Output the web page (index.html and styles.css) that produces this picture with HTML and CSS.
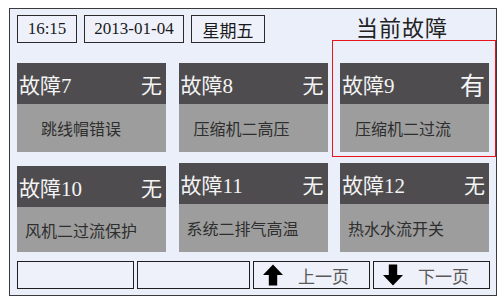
FILE: index.html
```html
<!DOCTYPE html>
<html lang="zh-CN">
<head>
    <meta charset="UTF-8">
    <title>当前故障</title>
    <link rel="stylesheet" href="styles.css">
</head>
<body>
    <div class="panel">
        <div class="top-bar">
            <div class="info-box time-box">16:15</div>
            <div class="info-box date-box">2013-01-04</div>
            <div class="info-box week-box">星期五</div>
            <div class="page-title">当前故障</div>
        </div>

        <div class="fault-grid">
            <div class="fault-card">
                <div class="fault-head"><span>故障7</span><span>无</span></div>
                <div class="fault-body indent-wide">跳线帽错误</div>
            </div>
            <div class="fault-card">
                <div class="fault-head"><span>故障8</span><span>无</span></div>
                <div class="fault-body indent-mid">压缩机二高压</div>
            </div>
            <div class="fault-card active">
                <div class="fault-head"><span>故障9</span><span class="state-on">有</span></div>
                <div class="fault-body indent-mid">压缩机二过流</div>
            </div>

            <div class="fault-card short">
                <div class="fault-head"><span>故障10</span><span>无</span></div>
                <div class="fault-body">风机二过流保护</div>
            </div>
            <div class="fault-card">
                <div class="fault-head"><span>故障11</span><span>无</span></div>
                <div class="fault-body">系统二排气高温</div>
            </div>
            <div class="fault-card">
                <div class="fault-head"><span>故障12</span><span>无</span></div>
                <div class="fault-body">热水水流开关</div>
            </div>
        </div>

        <div class="nav-bar">
            <div class="nav-btn"></div>
            <div class="nav-btn"></div>
            <div class="nav-btn">
                <svg class="arrow" viewBox="0 0 20 22" width="20" height="22">
                    <path d="M10 0.5 L20 11 L14.2 11 L14.2 21.5 L5.8 21.5 L5.8 11 L0 11 Z" fill="#000"/>
                </svg>
                <span>上一页</span>
            </div>
            <div class="nav-btn">
                <svg class="arrow" viewBox="0 0 20 22" width="20" height="22">
                    <path d="M10 21.5 L20 11 L14.2 11 L14.2 0.5 L5.8 0.5 L5.8 11 L0 11 Z" fill="#000"/>
                </svg>
                <span>下一页</span>
            </div>
        </div>
    </div>
</body>
</html>
```

FILE: styles.css
```css
* {
    margin: 0;
    padding: 0;
    box-sizing: border-box;
}

body {
    font-family: "Liberation Serif", "Noto Sans CJK SC", serif;
    background-color: #fff;
    color: #222;
    width: 500px;
    height: 304px;
    overflow: hidden;
}

.panel {
    margin: 8px 0 0 9px;
    width: 488px;
    height: 288px;
    border: 1px solid #3a3a3a;
    background-color: #ebeff9;
    padding: 6px 0 0 7px;
}

/* Top info row */
.top-bar {
    display: flex;
    align-items: center;
    gap: 7px;
    height: 28px;
}

.info-box {
    height: 28px;
    border: 1px solid #2a2a2a;
    background-color: #eef1fa;
    font-size: 17px;
    display: flex;
    align-items: center;
    justify-content: center;
    color: #1a1a1a;
}

.time-box { width: 60px; }
.date-box { width: 100px; }
.week-box { width: 74px; }

.page-title {
    flex: 1;
    text-align: center;
    font-size: 22px;
    letter-spacing: 1px;
    color: #222;
    padding-left: 36px;
    padding-bottom: 6px;
}

/* Fault cards */
.fault-grid {
    display: grid;
    grid-template-columns: 149px 149px 149px;
    grid-template-rows: 89px 90px;
    column-gap: 12.5px;
    row-gap: 10px;
    margin-top: 20px;
    align-items: end;
}

.fault-card {
    height: 89px;
    display: flex;
    flex-direction: column;
    position: relative;
}

.fault-card.short {
    height: 86px;
}

.fault-head {
    height: 41px;
    flex: none;
    background-color: #4e4c4f;
    color: #f4f4f4;
    font-size: 21px;
    display: flex;
    justify-content: space-between;
    align-items: center;
    padding: 0 4px 0 2px;
}

.state-on {
    font-size: 25px;
}

.fault-body {
    flex: 1;
    background-color: #9d9d9d;
    color: #2e2e2e;
    font-size: 16px;
    display: flex;
    align-items: center;
    padding-left: 8px;
}

.indent-wide { padding-left: 24px; }
.indent-mid { padding-left: 15px; }

/* Red highlight around the active fault */
.fault-card.active::before {
    content: "";
    position: absolute;
    top: -23px;
    left: -8px;
    right: -7px;
    bottom: -5px;
    border: 1.5px solid #e8141b;
}

/* Bottom navigation */
.nav-bar {
    display: grid;
    grid-template-columns: 117px 113px 117px 117px;
    gap: 3px;
    margin-top: 9px;
}

.nav-btn {
    height: 28px;
    border: 1px solid #1e1e1e;
    background-color: #eef1fa;
    display: flex;
    align-items: center;
    padding-left: 9px;
    gap: 15px;
    font-size: 17px;
    color: #5a5a5a;
}

.arrow {
    flex: none;
}
```
